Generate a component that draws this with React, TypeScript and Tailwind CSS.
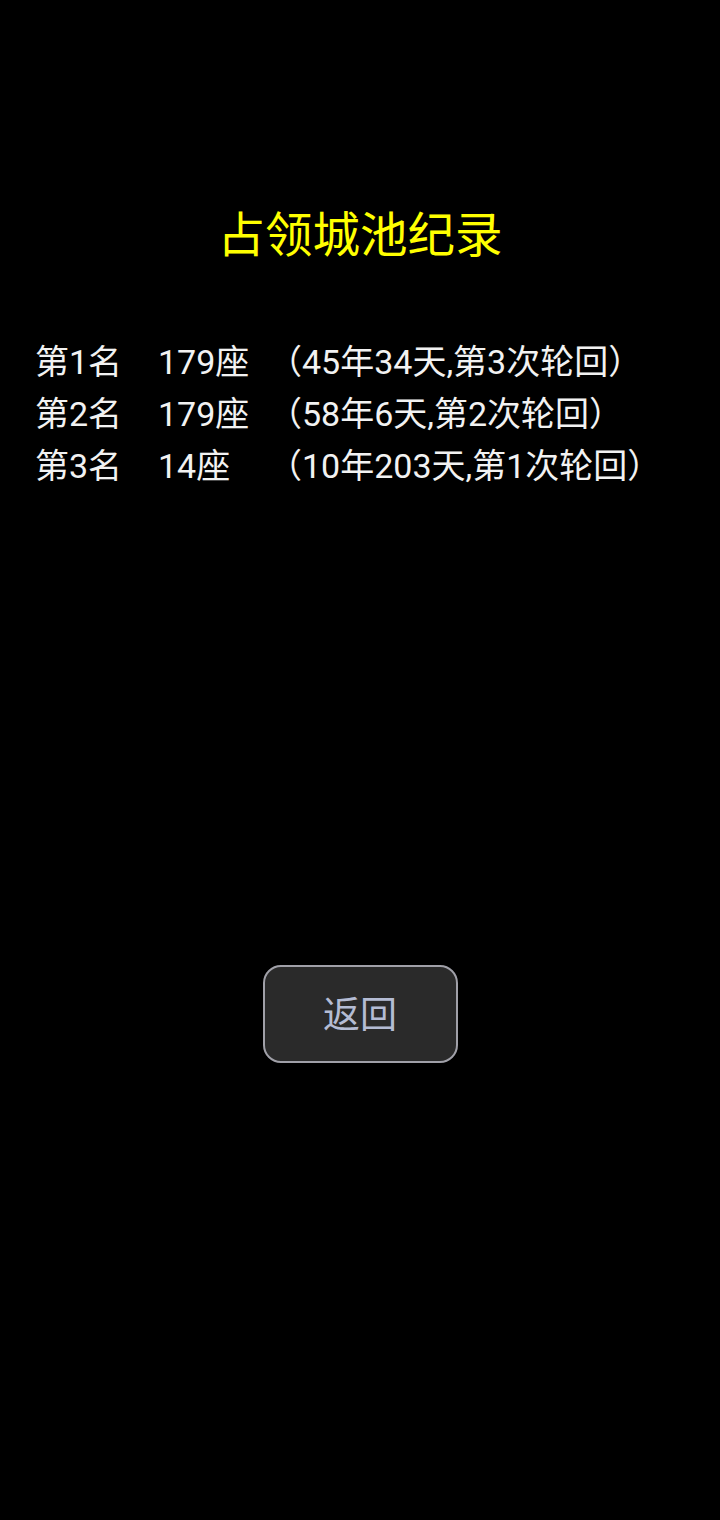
export default function App() {
  const rows = [
    ["第1名", "179座", "（45年34天,第3次轮回）"],
    ["第2名", "179座", "（58年6天,第2次轮回）"],
    ["第3名", "14座", "（10年203天,第1次轮回）"],
  ];
  return (
    <div
      className="w-[720px] h-[1520px] bg-black flex flex-col"
      style={{ fontFamily: 'Roboto, "Noto Sans CJK SC", sans-serif' }}
    >
      <div className="pt-[208px] h-[265px] text-center text-[47.5px] leading-[56px] text-[#ffff00]">
        占领城池纪录
      </div>
      <div className="pt-[71px] pl-[35px] flex flex-col text-[34px] leading-[52px] text-[#f2f2f2]">
        {rows.map((r, i) => (
          <div key={i} className="grid grid-cols-[123px_110px_1fr] whitespace-nowrap">
            <span>{r[0]}</span>
            <span>{r[1]}</span>
            <span>{r[2]}</span>
          </div>
        ))}
      </div>
      <div className="flex justify-center pt-[473px]">
        <div className="w-[195px] h-[98px] rounded-[18px] bg-[#2a2a2a] border-2 border-[#a0a0a8] flex items-center justify-center pt-[4px] text-[37px] text-[#b4bcd4]">
          返回
        </div>
      </div>
    </div>
  );
}
